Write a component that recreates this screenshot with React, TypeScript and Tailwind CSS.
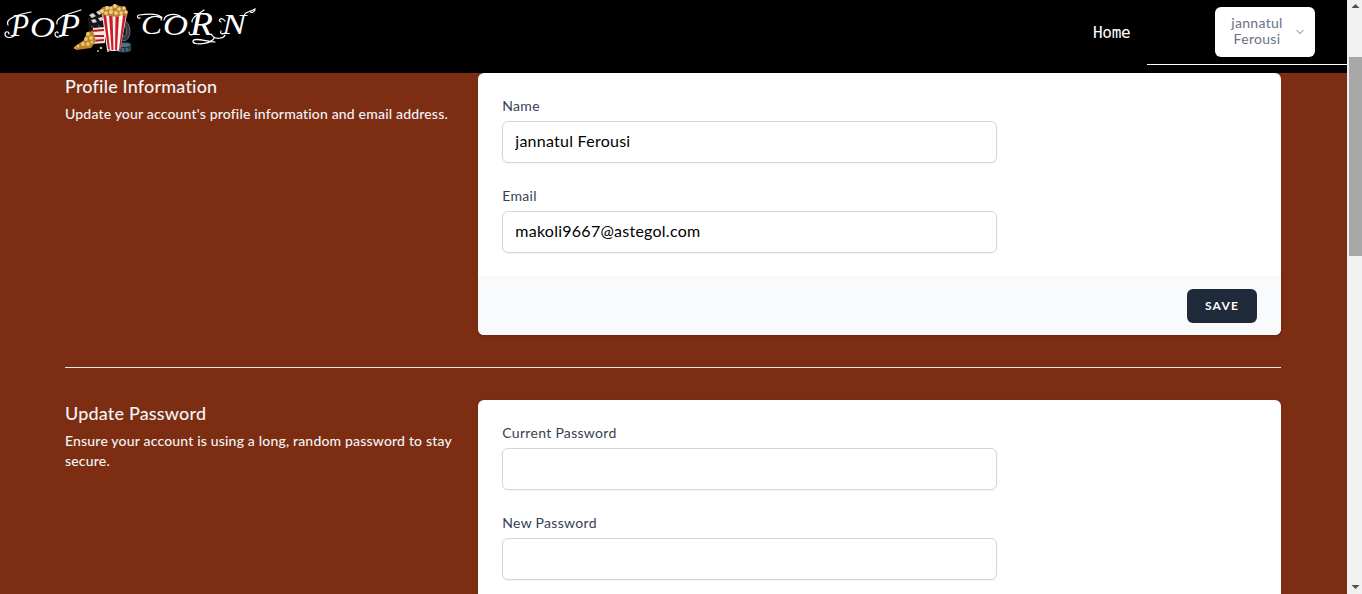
import type { ReactNode } from "react";

function Logo() {
  return (
    <svg width="260" height="60" viewBox="0 0 260 60" className="block shrink-0" aria-label="Popcorn">
      <g fill="#fff" fontFamily="'Liberation Serif', serif" fontStyle="italic">
        <text x="11" y="36" fontSize="32" textLength="18" lengthAdjust="spacingAndGlyphs">P</text>
        <text x="30" y="37" fontSize="29" textLength="25" lengthAdjust="spacingAndGlyphs">O</text>
        <text x="59" y="36" fontSize="32" textLength="21" lengthAdjust="spacingAndGlyphs">P</text>
        <text x="141" y="34" fontSize="27" textLength="21" lengthAdjust="spacingAndGlyphs">C</text>
        <text x="163" y="35" fontSize="29" textLength="25" lengthAdjust="spacingAndGlyphs">O</text>
        <text x="190" y="35" fontSize="33" textLength="23" lengthAdjust="spacingAndGlyphs">R</text>
        <text x="222" y="34" fontSize="29" textLength="24" lengthAdjust="spacingAndGlyphs">N</text>
      </g>
      {/* ornamental swashes */}
      <g fill="none" stroke="#fff" strokeWidth="1.2" strokeLinecap="round">
        <path d="M14 36C9 39 5 37 5 34c0-3 4-3 4 0M8 25c-3-6 8-10 23-13" />
        <path d="M62 36c-5 2-7 1-7-2 0-2 3-3 3-1M57 24c-2-6 8-9 24-14" />
        <path d="M161 17c-4-4-15-3-22-2-3 1-1 4 1 3" />
        <path d="M164 20c1-6 11-7 16-4" />
        <path d="M194 34c-4 2-5 0-5-2M192 22c-1-5 8-9 12-12M211 34c4 7 13 4 14 1M214 38c-2 6-22 8-21 3 1-4 15 1 22 1" />
        <path d="M225 33c-4 2-5 0-4-2M225 21c-4-5-8 0-4 1M244 16c1-5 5-3 11-7 0 3-4 5-5 2" />
      </g>
      {/* clapper board */}
      <path d="M88 17l16-3 2 17-17 2z" fill="#171719" />
      <path d="M89 15l4-2 3 3-4 2zM96 12l4-2 3 3-4 2zM91 20l4-1 2 3-4 1zM98 18l4-1 2 3-4 1z" fill="#d6d6d6" />
      <path d="M91 26l3 2m4-3 3 3" stroke="#656565" strokeWidth="1" />
      {/* film reels */}
      <ellipse cx="124" cy="31" rx="6" ry="10" fill="#353c45" stroke="#6b6570" />
      <ellipse cx="124" cy="31" rx="2.5" ry="5" fill="#151b22" stroke="#858087" strokeWidth=".7" />
      <path d="M116 45q6-5 15-2v8q-7 3-14 0z" fill="#29495a" />
      <ellipse cx="124" cy="45" rx="7" ry="2.5" fill="#547483" stroke="#1c303e" />
      <path d="M119 48v4m4-4v4m4-4v3" stroke="#6d8793" strokeWidth="1" />
      {/* tipped box with spilled popcorn */}
      <path d="M93 28l12-1v16l-13 1z" fill="#f2e8dc" />
      <path d="M92 31l12-1M92 36h12M91 41l13-1" stroke="#bb1824" strokeWidth="2" />
      <path d="M93 31l-6 1-3 8-10 7 2 3 15-2 5-7z" fill="#bc852b" />
      <g fill="#e6c468">
        <circle cx="88" cy="34" r="1.9" /><circle cx="91" cy="38" r="1.9" />
        <circle cx="86" cy="39" r="1.9" /><circle cx="83" cy="44" r="1.9" />
        <circle cx="78" cy="46" r="1.6" /><circle cx="88" cy="44" r="1.9" />
        <circle cx="92" cy="42" r="1.5" /><circle cx="75" cy="48" r="1" />
        <circle cx="101" cy="48" r="1.2" /><circle cx="98" cy="51" r=".9" /><circle cx="108" cy="51" r="1.1" />
      </g>
      {/* striped bucket */}
      <path d="M102 14h25l-7 36q-6 2-13 0z" fill="#faf5ef" />
      <path d="M103 14h3l4 36-2-1zM109 15h3.500l1 35h-2zM115.500 15h3.500l-2 35h-2zM123 15h3l-6 35h-1z" fill="#ce1b29" />
      <path d="M102 15l-3-4 4-4 5-1 3 1 3-3 6 2 5 1 3 5-1 4-5-1-5 2-7-1z" fill="#bd8430" />
      <g fill="#eed184">
        <circle cx="102" cy="11" r="2" /><circle cx="107" cy="8" r="2" />
        <circle cx="111" cy="8" r="1.7" /><circle cx="115" cy="6" r="1.9" />
        <circle cx="119" cy="9" r="1.8" /><circle cx="124" cy="8" r="1.8" />
        <circle cx="106" cy="13" r="1.8" /><circle cx="111" cy="12" r="2" />
        <circle cx="116" cy="13" r="1.9" /><circle cx="121" cy="13" r="1.8" /><circle cx="126" cy="12" r="1.6" />
      </g>
    </svg>
  );
}

function Header() {
  return (
    <header className="flex h-[73px] shrink-0 justify-between bg-black">
      <Logo />
      <div className="flex">
        <nav className="w-[54px] pt-[21px] font-['DejaVu_Sans_Mono',monospace] text-base leading-6 tracking-[-0.3px] text-white">
          <a>Home</a>
        </nav>
        <div className="flex h-[65px] w-[200px] justify-end border-b border-white pt-[7px] pr-8">
          <button className="flex h-[50px] w-[100px] items-center rounded-md bg-white pr-[10px] pl-4 text-gray-500">
            <span className="w-[52px] pb-0.5 text-center text-sm leading-4 tracking-[0.3px]">jannatul Ferousi</span>
            <svg className="ml-[12px] size-[10px]" fill="none" viewBox="0 0 24 24" strokeWidth="2.5" stroke="#9ca3af">
              <path strokeLinecap="round" strokeLinejoin="round" d="M19.5 8.25l-7.5 7.5-7.5-7.5" />
            </svg>
          </button>
        </div>
      </div>
    </header>
  );
}

function Section({ title, description, children }: { title: string; description: ReactNode; children: ReactNode }) {
  return (
    <section className="grid grid-cols-3 gap-6">
      <div className="text-gray-100">
        <h3 className="text-lg leading-[26px] font-medium tracking-[0.18px]">{title}</h3>
        <p className="mt-[5px] text-sm leading-5 font-medium whitespace-nowrap tracking-[0.18px]">{description}</p>
      </div>
      <div className="col-span-2 overflow-hidden rounded-md bg-white shadow-sm">{children}</div>
    </section>
  );
}

function Field({ label, value = "", type = "text" }: { label: string; value?: string; type?: string }) {
  return (
    <label className="col-span-4 block">
      <span className="block pb-0.5 text-sm leading-[18px] tracking-[0.3px] text-gray-700">{label}</span>
      <input
        type={type}
        defaultValue={value}
        className="mt-1 block h-[42px] w-full rounded-md border border-gray-300 bg-white px-3 pb-[3px] text-base tracking-[0.25px] text-black shadow-xs outline-none"
      />
    </label>
  );
}

function Scrollbar() {
  return (
    <div className="flex h-full w-[15px] shrink-0 flex-col items-center bg-[#f1f1f1] pl-[2px]">
      <svg width="13" height="57" viewBox="0 0 13 57"><path d="M2.5 8L6.5 4l4 4z" fill="#505050" /></svg>
      <div className="h-[199px] w-[13px] bg-[#a8a8a8]" />
      <svg className="mt-auto" width="13" height="17" viewBox="0 0 13 17"><path d="M2.5 8h8l-4 4z" fill="#505050" /></svg>
    </div>
  );
}

export default function App() {
  return (
    <div className="flex h-[594px] w-[1362px] overflow-hidden bg-[#7c2d12] font-[Lato,sans-serif]">
      <div className="flex h-full w-[1347px] flex-col overflow-hidden">
        <Header />
        <main className="w-[1281px] pl-[65px]">
          <Section title="Profile Information" description="Update your account's profile information and email address.">
            <div className="grid grid-cols-6 gap-6 px-6 pt-6 pb-[23px]">
              <Field label="Name" value="jannatul Ferousi" />
              <Field label="Email" value="makoli9667@astegol.com" />
            </div>
            <div className="flex h-[59px] justify-end bg-gray-50 px-6 pt-[13px]">
              <button className="h-[34px] w-[70px] rounded-md bg-gray-800 pb-px text-xs font-bold tracking-[1.2px] text-white">SAVE</button>
            </div>
          </Section>
          <div className="py-8"><div className="border-t border-gray-200" /></div>
          <Section title="Update Password" description={<>Ensure your account is using a long, random password to stay<br />secure.</>}>
            <div className="grid grid-cols-6 gap-6 p-6">
              <Field label="Current Password" type="password" />
              <Field label="New Password" type="password" />
            </div>
          </Section>
        </main>
      </div>
      <Scrollbar />
    </div>
  );
}
